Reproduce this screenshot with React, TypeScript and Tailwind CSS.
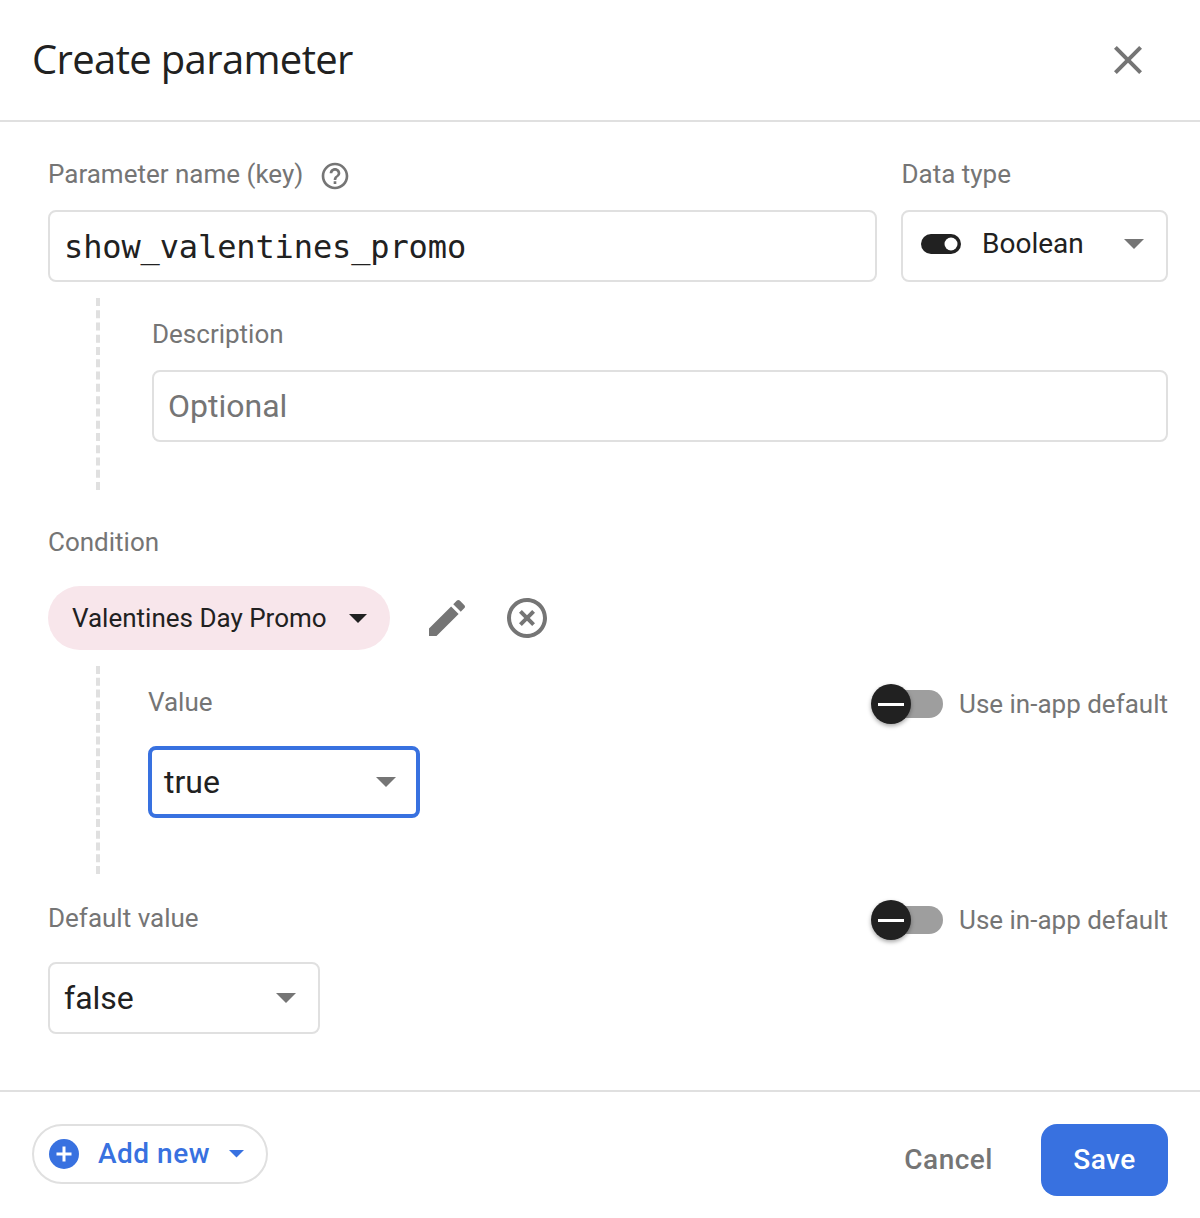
function Arrow({ color = "#757575", w = 20 }: { color?: string; w?: number }) {
  return (
    <svg width={w} height={w / 2} viewBox="0 0 20 10" className="shrink-0">
      <path d="M0 0h20L10 10z" fill={color} />
    </svg>
  );
}

function Icon({ d, size, color = "#757575", className = "" }: { d: string; size: number; color?: string; className?: string }) {
  return (
    <svg width={size} height={size} viewBox="0 0 24 24" className={className}>
      <path d={d} fill={color} />
    </svg>
  );
}

function InAppToggle() {
  return (
    <div className="flex items-center">
      <div className="relative w-[72px] h-[28px] mr-[16px]">
        <div className="ml-[14px] w-[58px] h-[28px] rounded-full bg-[#9e9e9e]" />
        <div className="absolute left-0 top-[-6px] w-10 h-10 rounded-full bg-[#212121] shadow-[0_2px_4px_rgba(0,0,0,0.35)] flex items-center justify-center">
          <div className="w-[26px] h-[3px] bg-white" />
        </div>
      </div>
      <span className="text-[26px] leading-8 text-[#757575]">Use in-app default</span>
    </div>
  );
}

export default function App() {
  return (
    <div className="w-[1200px] h-[1218px] bg-white font-['Roboto',sans-serif] flex flex-col overflow-hidden">
      <header className="h-[122px] shrink-0 border-b-2 border-[#e0e0e0] flex items-center justify-between pl-8 pr-[48px]">
        <h1 className="text-[40px] leading-[48px] text-[#212121] font-['Open_Sans',sans-serif] tracking-[-0.65px] mb-[2px]">Create parameter</h1>
        <Icon size={48} d="M19 6.41L17.59 5 12 10.59 6.41 5 5 6.41 10.59 12 5 17.59 6.41 19 12 13.41 17.59 19 19 17.59 13.41 12z" />
      </header>

      <main className="flex-1 pl-12 pr-8">
        <div className="flex gap-6 pt-[36px]">
          <div className="w-[829px]">
            <div className="flex items-center h-[36px] mb-[16px]">
              <span className="text-[26px] leading-8 text-[#757575] mb-[4px]">Parameter name (key)</span>
              <Icon className="ml-[16px]" size={32} d="M11 18h2v-2h-2v2zm1-16C6.48 2 2 6.48 2 12s4.48 10 10 10 10-4.48 10-10S17.52 2 12 2zm0 18c-4.41 0-8-3.59-8-8s3.59-8 8-8 8 3.59 8 8-3.59 8-8 8zm0-14c-2.21 0-4 1.79-4 4h2c0-1.1.9-2 2-2s2 .9 2 2c0 2-3 1.75-3 5h2c0-2.25 3-2.5 3-5 0-2.21-1.79-4-4-4z" />
            </div>
            <div className="h-[72px] border-2 border-[#e0e0e0] rounded-lg px-[14px] pt-[2px] flex items-center text-[32px] tracking-[-0.12px] text-[#212121] font-['DejaVu_Sans_Mono',monospace]">
              show_valentines_promo
            </div>
          </div>
          <div className="w-[267px]">
            <div className="flex items-center h-[36px] mb-[16px]">
              <span className="text-[26px] leading-8 text-[#757575] mb-[4px] ml-[0.5px]">Data type</span>
            </div>
            <div className="h-[72px] border-2 border-[#e0e0e0] rounded-lg pl-[18px] pr-[22px] pb-[4px] flex items-center">
              <svg width="40" height="20" viewBox="0 0 40 20" className="shrink-0">
                <rect width="40" height="20" rx="10" fill="#212121" />
                <circle cx="30" cy="10" r="6.5" fill="#fff" />
              </svg>
              <span className="ml-[21px] flex-1 text-[28px] leading-8 text-[#212121]">Boolean</span>
              <Arrow />
            </div>
          </div>
        </div>

        <div className="flex mt-[16px] h-[192px]">
          <div className="ml-[48px] h-[192px] border-l-4 border-dashed border-[#e0e0e0]" />
          <div className="ml-[52px] flex-1 pt-[20px]">
            <div className="h-[32px] mb-[20px] text-[26px] leading-8 text-[#757575]">Description</div>
            <div className="h-[72px] border-2 border-[#e0e0e0] rounded-lg px-[14px] flex items-center text-[32px] text-[#757575]">Optional</div>
          </div>
        </div>

        <div className="mt-[36px] h-[32px] text-[26px] leading-8 text-[#757575]">Condition</div>
        <div className="mt-[28px] flex items-center">
          <div className="w-[342px] h-[64px] rounded-full bg-[#f8e6eb] pl-6 pr-[23px] flex items-center justify-between">
            <span className="text-[26px] leading-8 text-[#212121]">Valentines Day Promo</span>
            <Arrow color="#212121" w={18} />
          </div>
          <Icon className="ml-[33px]" size={48} d="M3 17.25V21h3.75L17.81 9.94l-3.75-3.75L3 17.25zM20.71 7.04c.39-.39.39-1.02 0-1.41l-2.34-2.34c-.39-.39-1.02-.39-1.41 0l-1.83 1.83 3.75 3.75 1.83-1.83z" />
          <Icon className="ml-[32px]" size={48} d="M14.59 8L12 10.59 9.41 8 8 9.41 10.59 12 8 14.59 9.41 16 12 13.41 14.59 16 16 14.59 13.41 12 16 9.41 14.59 8zM12 2C6.47 2 2 6.47 2 12s4.47 10 10 10 10-4.47 10-10S17.53 2 12 2zm0 18c-4.41 0-8-3.59-8-8s3.59-8 8-8 8 3.59 8 8-3.59 8-8 8z" />
        </div>

        <div className="flex mt-[16px] h-[208px]">
          <div className="ml-[48px] h-[208px] border-l-4 border-dashed border-[#e0e0e0]" />
          <div className="ml-[48px] flex-1 pt-[20px]">
            <div className="flex items-center justify-between h-[36px]">
              <span className="text-[26px] leading-8 text-[#757575] mb-[4px]">Value</span>
              <InAppToggle />
            </div>
            <div className="mt-[24px] w-[272px] h-[72px] border-4 border-[#3871e0] rounded-lg pl-[12px] pr-[20px] flex items-center justify-between">
              <span className="text-[32px] text-[#212121]">true</span>
              <Arrow />
            </div>
          </div>
        </div>

        <div className="flex items-center justify-between h-[36px] mt-[28px]">
          <span className="text-[26px] leading-8 text-[#757575] mb-[4px]">Default value</span>
          <InAppToggle />
        </div>
        <div className="mt-[24px] w-[272px] h-[72px] border-2 border-[#e0e0e0] rounded-lg pl-[14px] pr-[22px] flex items-center justify-between">
          <span className="text-[32px] text-[#212121]">false</span>
          <Arrow />
        </div>
      </main>

      <footer className="h-[128px] shrink-0 border-t-2 border-[#e0e0e0] pl-8 pr-8 pt-[32px] flex items-start justify-between">
        <div className="w-[236px] h-[60px] border-2 border-[#e0e0e0] rounded-full pl-[15px] flex items-center">
          <svg width="30" height="30" viewBox="0 0 30 30" className="shrink-0">
            <circle cx="15" cy="15" r="15" fill="#3871e0" />
            <path d="M13.5 7.5h3v6h6v3h-6v6h-3v-6h-6v-3h6z" fill="#fff" />
          </svg>
          <span className="ml-[19px] text-[28px] leading-8 font-medium text-[#3871e0] tracking-[0.5px]">Add new</span>
          <span className="ml-[19px]"><Arrow color="#3871e0" w={15} /></span>
        </div>
        <div className="flex items-center">
          <span className="text-[28px] font-medium text-[#757575] tracking-[0.5px]">Cancel</span>
          <button className="ml-[48px] w-[127px] h-[72px] rounded-2xl bg-[#3871e0] text-white text-[28px] font-medium tracking-[0.5px]">Save</button>
        </div>
      </footer>
    </div>
  );
}
